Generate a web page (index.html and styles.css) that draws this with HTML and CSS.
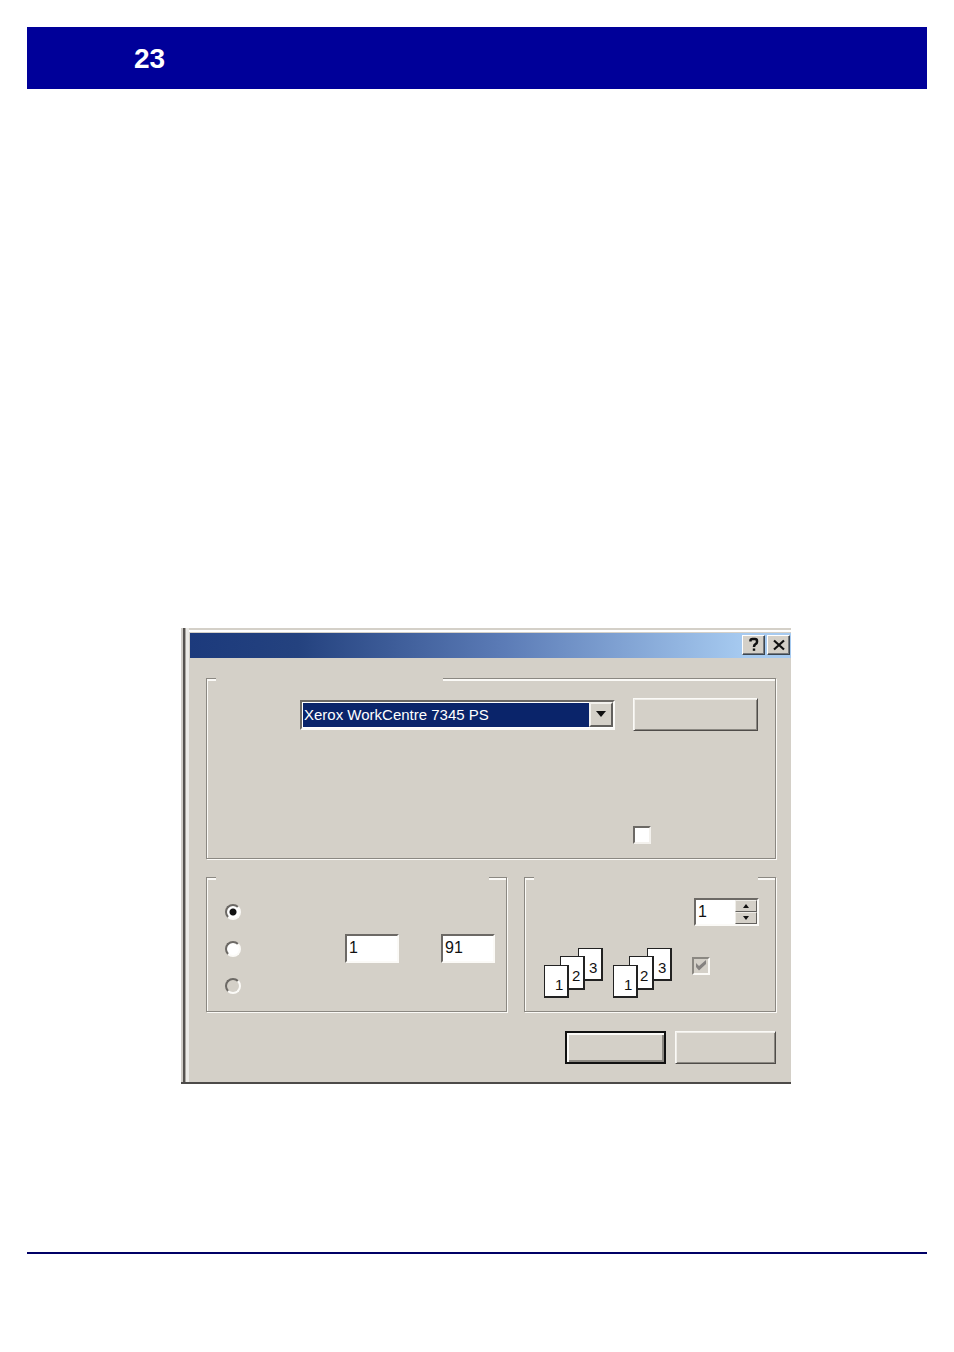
FILE: index.html
```html
<!DOCTYPE html>
<html lang="en">
<head>
<meta charset="utf-8">
<title>23</title>
<link rel="stylesheet" href="styles.css">
</head>
<body>
<header class="banner"><span class="page-number">23</span></header>
<main class="content">
  <form class="dialog" aria-label="Print">
    <div class="titlebar">
      <button type="button" class="caption-btn" aria-label="Help">
        <svg width="12" height="15" viewBox="0 0 12 15"><path d="M2.5 4.5V3.5Q2.5 2 4.500 2H7Q9 2 9 4V5Q9 6.500 7.500 7.200Q6 8 6 10" fill="none" stroke="#111" stroke-width="2.500"/><path d="M4.800 11.500h2.400v2.300h-2.400z" fill="#111"/></svg>
      </button>
      <button type="button" class="caption-btn" aria-label="Close">
        <svg width="12" height="15" viewBox="0 0 12 15"><path d="M1 3.500L11 12.500M11 3.500L1 12.500" fill="none" stroke="#111" stroke-width="2.200"/></svg>
      </button>
    </div>
    <div class="dialog-body">
      <fieldset class="group" aria-label="Printer">
        <legend class="gap gap-short"></legend>
        <div class="printer-grid">
          <div class="combo">
            <select class="combo-select" aria-label="Name"><option>Xerox WorkCentre 7345 PS</option></select>
            <span class="combo-arrow"><svg width="10" height="6" viewBox="0 0 10 6"><path d="M0 0H10L5 6z" fill="#111"/></svg></span>
          </div>
          <button type="button" class="btn" aria-label="Properties"></button>
          <input type="checkbox" class="check file-check" aria-label="Print to file">
        </div>
      </fieldset>
      <div class="lower">
        <fieldset class="group" aria-label="Print range">
          <legend class="gap"></legend>
          <div class="range">
            <div class="range-row"><input type="radio" class="radio" name="range" aria-label="All" checked></div>
            <div class="range-row">
              <input type="radio" class="radio" name="range" aria-label="Pages">
              <input type="text" class="field from" aria-label="From" value="1">
              <input type="text" class="field" aria-label="To" value="91">
            </div>
            <div class="range-row"><input type="radio" class="radio off" name="range" aria-label="Selection" disabled></div>
          </div>
        </fieldset>
        <fieldset class="group" aria-label="Copies">
          <legend class="gap"></legend>
          <div class="copies">
            <div class="spinner">
              <input type="text" class="spin-field" aria-label="Number of copies" value="1">
              <div class="spin-buttons">
                <button type="button" class="spin-btn" aria-label="More"><svg width="6" height="4" viewBox="0 0 6 4"><path d="M0 4H6L3 0z" fill="#111"/></svg></button>
                <button type="button" class="spin-btn" aria-label="Fewer"><svg width="6" height="4" viewBox="0 0 6 4"><path d="M0 0H6L3 4z" fill="#111"/></svg></button>
              </div>
            </div>
            <div class="collate">
              <svg class="sheets" width="60" height="50" viewBox="0 0 60 50">
                <path d="M34 0h25v33H34z" fill="#222"/><path d="M35 1h22v30H35z" fill="#fff"/>
                <path d="M16 8h25v34H16z" fill="#222"/><path d="M17 9h22v31H17z" fill="#fff"/>
                <path d="M0 17h25v33H0z" fill="#222"/><path d="M1 18h22v30H1z" fill="#fff"/>
                <text x="45" y="25">3</text><text x="28" y="33">2</text><text x="11" y="42">1</text>
              </svg>
              <svg class="sheets" width="60" height="50" viewBox="0 0 60 50">
                <path d="M34 0h25v33H34z" fill="#222"/><path d="M35 1h22v30H35z" fill="#fff"/>
                <path d="M16 8h25v34H16z" fill="#222"/><path d="M17 9h22v31H17z" fill="#fff"/>
                <path d="M0 17h25v33H0z" fill="#222"/><path d="M1 18h22v30H1z" fill="#fff"/>
                <text x="45" y="25">3</text><text x="27" y="33">2</text><text x="11" y="42">1</text>
              </svg>
              <span class="check-wrap">
                <input type="checkbox" class="check off" aria-label="Collate" checked disabled>
                <svg class="tick" width="12" height="11" viewBox="0 0 12 11"><path d="M1 3L4 6L11 0V4L4 10.500L1 7z" fill="#858280"/></svg>
              </span>
            </div>
          </div>
        </fieldset>
      </div>
      <div class="actions">
        <button type="submit" class="btn default" aria-label="OK"></button>
        <button type="button" class="btn" aria-label="Cancel"></button>
      </div>
    </div>
  </form>
</main>
<hr class="rule">
</body>
</html>
```

FILE: styles.css
```css
* { box-sizing: border-box; }
body {
  margin: 0;
  padding: 27px 27px 98px;
  background: #fff;
  color: #111;
  font: 16px "Liberation Sans", Arial, sans-serif;
}
button, input, select { margin: 0; padding: 0; font: inherit; color: inherit; border-radius: 0; }
svg { display: block; }
.banner {
  display: flex;
  align-items: center;
  height: 62px;
  padding: 2px 107px 0;
  background: #000099;
}
.page-number {
  color: #fff;
  font: bold 28px "Liberation Sans Narrow", "Arial Narrow", "Liberation Sans", sans-serif;
}
.content { padding: 539px 136px 168px 154px; }
.dialog {
  padding: 5px 0 0 9px;
  background: #d4d0c8;
  border-bottom: 2px solid #4c4a48;
  box-shadow: inset 2px 0 #d0cdc8, inset 4px 0 #55524f, inset 5px 0 #aaa7a2, inset 8px 0 #ebeae6, inset 0 2px #d4d0c8, inset 0 4px #fff;
}
.titlebar {
  display: flex;
  justify-content: flex-end;
  align-items: center;
  gap: 2px;
  height: 25px;
  padding: 0 1px 2px 0;
  background: linear-gradient(to right, #1c3a7c, #24427f 18%, #5b7bb6 52%, #a6caf0 92%);
}
.caption-btn {
  display: grid;
  place-items: center;
  width: 23px;
  height: 20px;
  background: #d4d0c8;
  border: 1px solid;
  border-color: #fff #3c4650 #3c4650 #fff;
  box-shadow: inset -1px -1px #77797c;
}
.dialog-body { padding: 18px 15px 18px 16px; }
.group {
  min-width: 0;
  margin: 0;
  padding: 0;
  border: 1px solid #8b8882;
  box-shadow: 1px 1px #fbfaf7, inset 1px 2px #fbfaf7;
}
.gap { width: calc(100% - 26px); height: 5px; margin-left: 9px; padding: 0; background: #d4d0c8; }
.gap-short { width: 40%; }
.printer-grid {
  display: grid;
  grid-template-columns: 1fr 125px;
  column-gap: 18px;
  align-items: center;
  padding: 17px 17px 14px 93px;
}
.combo { position: relative; height: 30px; border: 2px solid; border-color: #6c6965 #fbfaf7 #fbfaf7 #6c6965; background: #fff; }
.combo-select {
  appearance: none;
  display: block;
  width: 100%;
  height: 26px;
  padding: 0 24px 0 1px;
  border: 1px solid #fff;
  outline: 0;
  background: #0a246a;
  color: #fff;
  font-size: 15px;
}
.combo-arrow {
  position: absolute;
  top: 0;
  right: 0;
  display: grid;
  place-items: center;
  width: 24px;
  height: 25px;
  background: #d4d0c8;
  border: 2px solid;
  border-color: #f3f1ed #62605d #62605d #f3f1ed;
  pointer-events: none;
}
.btn {
  height: 33px;
  background: #d4d0c8;
  border: 1px solid;
  border-color: #fbfaf7 #4f4c49 #4f4c49 #fbfaf7;
  box-shadow: inset 1px 1px #efede8, inset -1px -1px #8b8882;
}
.btn.default { border: 2px solid #111; box-shadow: inset 2px 2px #fbfaf7, inset -2px -2px #8b8882; }
.check {
  appearance: none;
  display: block;
  width: 18px;
  height: 18px;
  background: #fff;
  border: 2px solid;
  border-color: #6c6965 #f3f1ed #f3f1ed #6c6965;
}
.check.off { background: #d4d0c8; border-color: #8b8882 #fbfaf7 #fbfaf7 #8b8882; }
.file-check { grid-column: 2; margin-top: 95px; }
.check-wrap { position: relative; }
.tick { position: absolute; top: 3px; left: 3px; }
.lower { display: grid; grid-template-columns: 301fr 252fr; gap: 17px; margin-top: 16px; }
.range { display: grid; gap: 8px; padding: 17px 11px 11px 18px; }
.range-row { display: flex; align-items: center; height: 29px; }
.radio {
  appearance: none;
  width: 16px;
  height: 16px;
  border: 2px solid;
  border-color: #6c6965 #fbfaf7 #fbfaf7 #6c6965;
  border-radius: 50%;
  background: #fff;
}
.radio:checked { background: radial-gradient(circle, #111 3px, #fff 4px); }
.radio.off { background: #d4d0c8; }
.field {
  width: 54px;
  height: 29px;
  padding: 0 2px 2px;
  background: #fff;
  border: 2px solid;
  border-color: #6c6965 #fbfaf7 #fbfaf7 #6c6965;
}
.field.from { margin-left: auto; margin-right: 42px; }
.copies { display: grid; align-content: start; gap: 22px; padding: 18px 16px 11px 19px; }
.spinner {
  display: flex;
  justify-self: end;
  width: 65px;
  height: 28px;
  background: #fff;
  border: 2px solid;
  border-color: #6c6965 #fbfaf7 #fbfaf7 #6c6965;
}
.spin-field { flex: 1; min-width: 0; padding: 0 2px; border: 0; background: #fff; }
.spin-buttons { display: grid; width: 22px; }
.spin-btn {
  display: grid;
  place-items: center;
  background: #d4d0c8;
  border: 1px solid;
  border-color: #efede8 #62605d #62605d #efede8;
}
.collate { display: flex; align-items: center; gap: 9px; }
.sheets { flex: none; font-size: 15px; fill: #111; }
.collate .check-wrap { margin-left: 10px; margin-bottom: 14px; }
.actions { display: flex; justify-content: flex-end; gap: 9px; margin-top: 19px; }
.actions .btn { width: 101px; }
.rule { height: 2px; margin: 0; border: 0; background: #000066; }
```
